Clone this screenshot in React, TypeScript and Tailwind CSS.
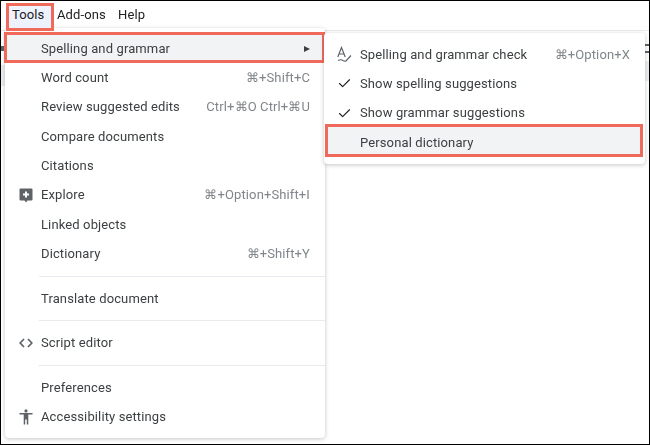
import { Check } from 'lucide-react';
import type { ReactNode } from 'react';

type RowProps = {
  label: string;
  icon?: ReactNode;
  shortcut?: string;
  arrow?: boolean;
  rowClass?: string;
  iconClass?: string;
};

const SpellIcon = () => (
  <svg width="15" height="17" viewBox="0 0 15 17" fill="none" stroke="#5f6368" strokeWidth="1.2">
    <path d="M0.8 11 L4.5 1.5 L8.2 11 M2 8 H7" />
    <path d="M1 14.5 Q4 13 6 14.5 Q7.5 15.5 9 15 L14 9.5" />
  </svg>
);

const ExploreIcon = () => (
  <svg width="14" height="15" viewBox="0 0 14 15">
    <path d="M1.5 0.5 H12.5 A1 1 0 0 1 13.5 1.5 V11.5 A1 1 0 0 1 12.5 12.5 H8.5 L7 14.5 L5.5 12.5 H1.5 A1 1 0 0 1 0.5 11.5 V1.5 A1 1 0 0 1 1.5 0.5 Z" fill="#5f6368" />
    <path d="M7 3.5 V9.5 M4 6.5 H10" stroke="#fff" strokeWidth="2" />
  </svg>
);

const CodeIcon = () => (
  <svg width="14" height="10" viewBox="0 0 14 10" fill="none" stroke="#5f6368" strokeWidth="1.7">
    <path d="M5 1 L1.2 5 L5 9 M9 1 L12.8 5 L9 9" />
  </svg>
);

const PersonIcon = () => (
  <svg width="14" height="16" viewBox="0 0 14 16" fill="#5f6368">
    <circle cx="7" cy="1.9" r="1.6" />
    <path d="M0.5 4 H13.5 V5.4 H9.3 V15.5 H7.8 V10.5 H6.2 V15.5 H4.7 V5.4 H0.5 Z" />
  </svg>
);

const Row = ({ label, icon, shortcut, arrow, rowClass = 'h-[29.3px]', iconClass = 'w-[36px]' }: RowProps) => (
  <div className={`flex items-center text-[#3c4043] ${rowClass}`}>
    <div className={`flex shrink-0 justify-end pr-[8px] ${iconClass}`}>{icon}</div>
    <span>{label}</span>
    {shortcut && <span className="ml-auto pr-[15px] text-[#80868b]">{shortcut}</span>}
    {arrow && <span className="ml-auto mr-[12px] h-0 w-0 border-y-[3.5px] border-l-[6px] border-y-transparent border-l-[#3c4043]" />}
  </div>
);

const Divider = () => <div className="my-[7.2px] ml-[34px] h-px bg-[#e8eaed]" />;

const App = () => {
  return (
    <div className="relative h-[445px] w-[650px] overflow-hidden border border-black bg-white font-['Roboto',sans-serif] text-[13px] tracking-[0.12px] text-[#3c4043]">
      <div className="h-full blur-[0.35px]">
        {/* menu bar */}
        <div className="flex h-[30px] items-center border-b border-[#e8eaed] pb-[2px] pl-[5px] text-[13px] text-[#202124]">
          <span className="relative z-10 mt-[2px] flex h-[28px] w-[48px] items-center self-start border-[3px] border-[#ef6a5b] bg-[#edf2fc] pb-[4px] pl-[3px]">
            Tools
          </span>
          <span className="ml-[3px] w-[61px]">Add-ons</span>
          <span>Help</span>
        </div>

        {/* bits of the toolbar peeking out behind the menus */}
        <div className="flex justify-between">
          <div className="flex flex-col gap-[14px] pt-[15px]">
            <div className="h-[5px] w-[3px] bg-[#5f6368]" />
            <div className="h-[21px] w-[4px] bg-[#eceef0]" />
          </div>
          <div className="flex flex-col items-end pt-[13px]">
            <div className="h-[2px] w-[4px] bg-[#5f6368]" />
            <div className="mt-[5px] h-[2px] w-[4px] bg-[#5f6368]" />
            <div className="mt-[8px] h-[20px] w-[4px] bg-[#eceef0]" />
          </div>
        </div>

        {/* tools menu */}
        <div className="absolute left-[4px] top-[27px] w-[320px] rounded-[4px] bg-white py-[6px] shadow-[0_1px_4px_rgba(60,64,67,0.3)]">
          <Row
            label="Spelling and grammar"
            arrow
            rowClass="-mx-[1px] -mt-[2px] mr-0 h-[31.3px] border-[3px] border-[#ef6a5b] bg-[#f1f3f4] pt-[2px]"
            iconClass="w-[34px]"
          />
          <Row label="Word count" shortcut="⌘+Shift+C" />
          <Row label="Review suggested edits" shortcut="Ctrl+⌘O Ctrl+⌘U" />
          <Row label="Compare documents" />
          <Row label="Citations" />
          <Row label="Explore" icon={<ExploreIcon />} shortcut="⌘+Option+Shift+I" />
          <Row label="Linked objects" />
          <Row label="Dictionary" shortcut="⌘+Shift+Y" />
          <Divider />
          <Row label="Translate document" />
          <Divider />
          <Row label="Script editor" icon={<CodeIcon />} />
          <Divider />
          <Row label="Preferences" />
          <Row label="Accessibility settings" icon={<PersonIcon />} />
        </div>

        {/* submenu */}
        <div className="absolute left-[323px] top-[32px] w-[321px] rounded-[4px] bg-white py-[7px] shadow-[0_1px_4px_rgba(60,64,67,0.3)]">
          <Row label="Spelling and grammar check" icon={<SpellIcon />} shortcut="⌘+Option+X" />
          <Row label="Show spelling suggestions" icon={<Check size={15} strokeWidth={1.8} color="#202124" />} />
          <Row label="Show grammar suggestions" icon={<Check size={15} strokeWidth={1.8} color="#202124" />} />
          <Row
            label="Personal dictionary"
            rowClass="-mt-[4px] ml-[1px] mr-[2px] h-[33.3px] border-[3px] border-[#ef6a5b] bg-[#f1f3f4] pt-[4px]"
            iconClass="w-[32px]"
          />
        </div>
      </div>
    </div>
  );
};

export default App;
